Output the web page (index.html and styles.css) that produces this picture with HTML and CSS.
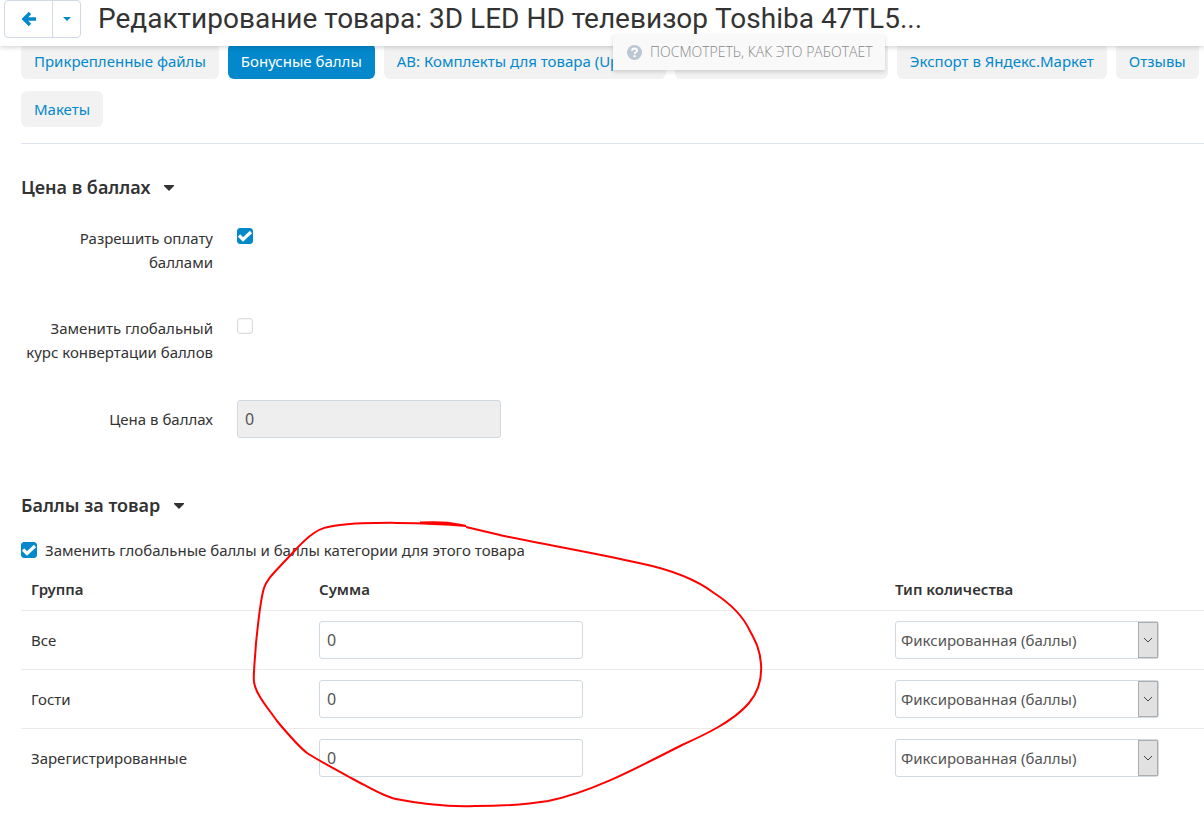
FILE: index.html
```html
<!DOCTYPE html>
<html lang="ru">
<head>
<meta charset="utf-8">
<title>Редактирование товара</title>
<link rel="stylesheet" href="styles.css">
</head>
<body>
<header class="topbar">
  <div class="back-group">
    <button class="back-btn" type="button" aria-label="Назад">
      <svg width="14" height="16" viewBox="0 0 14 16"><path d="M8 2 2 8l6 6M2.500 8H14" fill="none" stroke="#0388cc" stroke-width="3.400"/></svg>
    </button>
    <button class="back-menu" type="button" aria-label="История">
      <svg width="8" height="4" viewBox="0 0 8 4"><path d="M0 0h8L4 4z" fill="#0388cc"/></svg>
    </button>
  </div>
  <h1 class="title">Редактирование товара: 3D LED HD телевизор Toshiba 47TL5...</h1>
  <a class="how-it-works" href="#">
    <svg width="15" height="15" viewBox="0 0 15 15"><circle cx="7.500" cy="7.500" r="7.500" fill="#bcc7d2"/><path d="M5 5.700C5.200 2.900 10 2.900 10 5.500 10 7.300 7.600 7.200 7.600 9" fill="none" stroke="#fff" stroke-width="2"/><path d="M6.500 10.200h2.200v2H6.500z" fill="#fff"/></svg>
    <span>ПОСМОТРЕТЬ, КАК ЭТО РАБОТАЕТ</span>
  </a>
</header>

<main class="content">
  <nav class="tabs">
    <a class="tab" href="#">Прикрепленные файлы</a>
    <a class="tab tab-active" href="#">Бонусные баллы</a>
    <a class="tab tab-kits" href="#">АВ: Комплекты для товара (Up-sell)</a>
    <a class="tab tab-blank" href="#" aria-label="Вкладка"></a>
    <a class="tab" href="#">Экспорт в Яндекс.Маркет</a>
    <a class="tab" href="#">Отзывы</a>
    <a class="tab" href="#">Макеты</a>
  </nav>

  <section class="price">
    <h2 class="section-title">Цена в баллах <svg width="10" height="7" viewBox="0 0 10 7"><path d="M0 1h10v1L5 7 0 2z" fill="#333"/></svg></h2>
    <div class="field">
      <label class="field-label" for="allow">Разрешить оплату баллами</label>
      <span class="check"><input type="checkbox" id="allow" checked><svg viewBox="0 0 16 16"><path d="M2 7.500 6 11.500 14 4" fill="none" stroke="#fff" stroke-width="3.200"/></svg></span>
    </div>
    <div class="field">
      <label class="field-label" for="rate">Заменить глобальный курс конвертации баллов</label>
      <span class="check"><input type="checkbox" id="rate"></span>
    </div>
    <div class="field field-input">
      <label class="field-label" for="price">Цена в баллах</label>
      <input class="text" type="text" id="price" value="0" disabled>
    </div>
  </section>

  <section class="points">
    <h2 class="section-title">Баллы за товар <svg width="10" height="7" viewBox="0 0 10 7"><path d="M0 1h10v1L5 7 0 2z" fill="#333"/></svg></h2>
    <div class="override">
      <span class="check"><input type="checkbox" id="override" checked><svg viewBox="0 0 16 16"><path d="M2 7.500 6 11.500 14 4" fill="none" stroke="#fff" stroke-width="3.200"/></svg></span>
      <label for="override">Заменить глобальные баллы и баллы категории для этого товара</label>
    </div>
    <table class="groups">
      <thead>
        <tr><th class="col-group">Группа</th><th>Сумма</th><th class="col-type">Тип количества</th></tr>
      </thead>
      <tbody>
        <tr>
          <td><label for="a1">Все</label></td>
          <td><input class="text" type="text" id="a1" value="0"></td>
          <td><span class="select"><select aria-label="Тип количества: Все"><option>Фиксированная (баллы)</option></select><span class="arrow"><svg width="10" height="6" viewBox="0 0 10 6"><path d="M1 1l4 4 4-4" fill="none" stroke="#444"/></svg></span></span></td>
        </tr>
        <tr>
          <td><label for="a2">Гости</label></td>
          <td><input class="text" type="text" id="a2" value="0"></td>
          <td><span class="select"><select aria-label="Тип количества: Гости"><option>Фиксированная (баллы)</option></select><span class="arrow"><svg width="10" height="6" viewBox="0 0 10 6"><path d="M1 1l4 4 4-4" fill="none" stroke="#444"/></svg></span></span></td>
        </tr>
        <tr>
          <td><label for="a3">Зарегистрированные</label></td>
          <td><input class="text" type="text" id="a3" value="0"></td>
          <td><span class="select"><select aria-label="Тип количества: Зарегистрированные"><option>Фиксированная (баллы)</option></select><span class="arrow"><svg width="10" height="6" viewBox="0 0 10 6"><path d="M1 1l4 4 4-4" fill="none" stroke="#444"/></svg></span></span></td>
        </tr>
      </tbody>
    </table>
  </section>
</main>

<svg class="marker" width="520" height="300" viewBox="250 515 520 300" aria-hidden="true">
  <path d="M420 522.500C445 521.500 452 523 466 526C425 522 365 522 340 525C326 527 321 528 314 533C302 541 295 551 284 562C274 573 267 579 264 588C260 601 258 625 256 643C255 660 253 676 254 682C256 695 268 708 277 721C287 733 297 745 307 753C321 762 332 767 351 778C367 786 384 797 396 799C421 804 447 807 475 806C498 806 524 805 548 801C590 793 635 769 682 745C702 736 733 722 749 703C759 691 762 677 761 664C760 650 756 642 750 631C744 618 731 604 714 593C693 577 663 568 639 563C590 552 520 540 500 535L466 527" fill="none" stroke="#f00" stroke-width="2"/>
</svg>
</body>
</html>
```

FILE: styles.css
```css
* { box-sizing: border-box; }
body {
  margin: 0;
  background: #fff;
  color: #333;
  font: 15px/24px "Noto Sans", "Open Sans", sans-serif;
}
button, input, select { font: inherit; }

.topbar {
  position: relative;
  z-index: 2;
  display: flex;
  height: 46px;
  padding-left: 4px;
  gap: 17px;
  background: #fff;
  box-shadow: 0 1px 5px rgba(0, 0, 0, 0.2);
}
.back-group {
  display: flex;
  height: 38px;
  border: 1px solid #cfdae6;
  border-radius: 4px;
}
.back-group button {
  display: flex;
  align-items: center;
  justify-content: center;
  padding: 0;
  border: 0;
  background: none;
}
.back-group .back-btn { width: 48px; border-right: 1px solid #cfdae6; }
.back-menu { width: 27px; }
.title {
  margin: 0;
  font: 400 28px/38px Roboto, "Open Sans", sans-serif;
  white-space: nowrap;
}
.how-it-works {
  position: absolute;
  top: 34px;
  left: 613px;
  display: flex;
  align-items: center;
  gap: 8px;
  height: 36px;
  padding: 0 12px 0 14px;
  background: #f9f9f9;
  box-shadow: 0 2px 4px rgba(0, 0, 0, 0.15);
  color: #888;
  font-family: "Open Sans", sans-serif;
  font-size: 14px;
  font-weight: 300;
  text-decoration: none;
  white-space: nowrap;
}

.content { padding-left: 21px; }
.tabs {
  display: flex;
  flex-wrap: wrap;
  gap: 12px 9px;
  margin-top: -3px;
  padding-bottom: 16px;
  border-bottom: 1px solid #dde3ee;
}
.tab {
  height: 36px;
  padding: 0 13px;
  border-radius: 6px;
  background: #f2f2f2;
  color: #0388cc;
  line-height: 37px;
  text-decoration: none;
  white-space: nowrap;
}
.tab-active { background: #0388cc; color: #fff; }
.tab-kits { width: 282px; overflow: hidden; }
.tab-blank { width: 213px; }

.section-title {
  display: flex;
  align-items: center;
  gap: 14px;
  margin: 0;
  font-size: 18px;
  font-weight: 600;
  line-height: 30px;
}
.price { padding-top: 28px; }
.field {
  display: flex;
  gap: 24px;
  height: 48px;
  margin-top: 42px;
}
.field .check { margin-top: 2px; }
.section-title + .field { margin-top: 24px; }
.field-label { width: 192px; text-align: right; }
.field-input { align-items: center; height: 38px; margin-top: 36px; }

.check {
  position: relative;
  flex: none;
  width: 16px;
  height: 16px;
}
.check input {
  display: block;
  width: 16px;
  height: 16px;
  margin: 0;
  border: 1px solid #ddd;
  border-radius: 3px;
  appearance: none;
  background: #fff;
  box-shadow: inset 0 0 2px #ddd;
}
.check input:checked { border-color: #0388cc; background: #0388cc; box-shadow: none; }
.check svg { position: absolute; inset: 0; pointer-events: none; }

.text, .select select {
  display: block;
  width: 264px;
  height: 38px;
  border: 1px solid #cfd9e2;
  border-radius: 3px;
  background: #fff;
  color: #555;
}
.text { padding: 0 7px; font-size: 16px; }
.text:disabled { background: #eee; }
.select { position: relative; display: block; width: 264px; }
.select select { padding: 0 5px; appearance: none; }
.arrow {
  position: absolute;
  top: 1px;
  right: 1px;
  bottom: 1px;
  display: flex;
  align-items: center;
  justify-content: center;
  width: 20px;
  border: 1px solid #adadad;
  background: #e1e1e1;
  pointer-events: none;
}

.points { padding-top: 52px; }
.override {
  display: flex;
  align-items: center;
  gap: 8px;
  margin-top: 18px;
}
.groups {
  width: 100%;
  margin-top: 6px;
  border-collapse: separate;
  border-spacing: 0;
  table-layout: fixed;
}
.groups th, .groups td { padding: 10px; border-bottom: 1px solid #ebebeb; }
.groups th { height: 43px; padding: 0 10px; font-weight: 600; text-align: left; }
.groups tr:last-child td { border-bottom: 0; }
.groups .col-group { width: 288px; }
.groups .col-type { width: 319px; }

.marker { position: absolute; top: 515px; left: 250px; z-index: 3; pointer-events: none; }
```
